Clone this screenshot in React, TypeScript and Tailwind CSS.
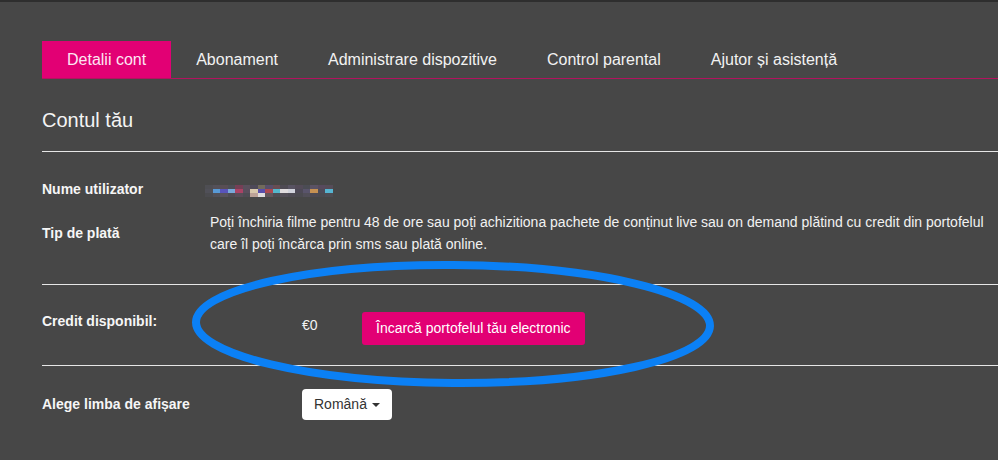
import React from "react";

const TABS = ["Detalii cont", "Abonament", "Administrare dispozitive", "Control parental", "Ajutor și asistență"];

// blurred username, drawn as a pixel mosaic
const PIXELS: string[][] = [
  ["#4f4f55", "#56525a", "#5a4f56", "#4d4f57", "#7a3f58", "#5d5260", "#4e4a5a", "#77705e", "#5a5070", "#6c4e55", "#4f4b55", "#5a5566", "#554c5a", "#4c4d56", "#5d5468", "#594b60", "#574d5a"],
  ["#52525a", "#5aa4e6", "#5b56c8", "#7fb4ea", "#b54369", "#5b5060", "#e8d6b8", "#5a4fb8", "#b84a52", "#56c4dc", "#f2eef0", "#e2e4ee", "#4e4a58", "#5b5670", "#d49a54", "#4e4c5a", "#58c2e2"],
  ["#4c4c50", "#53525a", "#5a5560", "#4f4d55", "#5a4e5a", "#4e4d55", "#c9aca0", "#f0eef0", "#65585e", "#4f4d55", "#55505a", "#4f4c56", "#4c4b52", "#534f5a", "#4e4b55", "#4c4b52", "#4e4d55"],
];

export default function App() {
  return (
    <div
      className="relative w-[998px] h-[460px] overflow-hidden bg-[#474747] border-t-2 border-[#2e2e2e] pl-[42px] pt-[39px] text-white"
      style={{ fontFamily: '"Liberation Sans", Arial, sans-serif' }}
    >
      {/* tabs */}
      <div className="flex border-b border-[#b3135f] w-[1000px]">
        {TABS.map((t, i) => (
          <div
            key={t}
            className={
              "h-[37px] px-[25px] flex items-center text-[16px] whitespace-nowrap " +
              (i === 0 ? "bg-[#e20074] text-[#fde6f2]" : "text-[#f2f2f2]")
            }
          >
            {t}
          </div>
        ))}
      </div>

      <div className="mt-[29px] pb-[19px] border-b border-[#e6e6e6] w-[1000px]">
        <h1 className="text-[20px] leading-[24px] text-[#f4f4f4]">Contul tău</h1>
      </div>

      {/* rows */}
      <div className="pt-[24px] pb-[29px] border-b border-[#e6e6e6] w-[1000px]">
        <div className="flex items-center h-[27px]">
          <div className="w-[163px] shrink-0 text-[14px] font-bold text-[#f6f6f6]">Nume utilizator</div>
          <div className="flex flex-col opacity-90 mt-[2px]">
            {PIXELS.map((row, r) => (
              <div key={r} className="flex">
                {row.map((c, k) => (
                  <div key={k} className="w-[7.5px] h-[4px]" style={{ background: c }} />
                ))}
              </div>
            ))}
          </div>
        </div>
        <div className="flex items-center mt-[8px]">
          <div className="w-[168px] shrink-0 text-[14px] font-bold text-[#f6f6f6]">Tip de plată</div>
          <p className="shrink-0 whitespace-nowrap text-[14px] leading-[22px] text-[#f2f2f2]">
            Poți închiria filme pentru 48 de ore sau poți achizitiona pachete de conținut live sau on demand plătind cu credit din portofelul
            <br />
            care îl poți încărca prin sms sau plată online.
          </p>
        </div>
      </div>

      <div className="flex items-center h-[81px] border-b border-[#e6e6e6] w-[1000px]">
        <div className="w-[260px] shrink-0 text-[14px] font-bold text-[#f6f6f6] pb-[7px]">Credit disponibil:</div>
        <div className="w-[60px] shrink-0 text-[14px] text-[#f4f4f4]">€0</div>
        <button className="h-[33px] px-[14px] bg-[#e20074] rounded-[3px] text-[14px] text-white mt-[6px]">
          Încarcă portofelul tău electronic
        </button>
      </div>

      <div className="flex items-center mt-[23px]">
        <div className="w-[260px] shrink-0 text-[14px] font-bold text-[#f6f6f6]">Alege limba de afișare</div>
        <button className="h-[31px] px-[12px] bg-white rounded-[4px] text-[14px] text-[#333] flex items-center gap-[5px]">
          Română
          <span className="w-0 h-0 border-l-[4px] border-r-[4px] border-t-[4px] border-l-transparent border-r-transparent border-t-[#333]" />
        </button>
      </div>

      {/* hand-drawn highlight */}
      <svg className="absolute left-[190px] top-[255px] pointer-events-none" width="528" height="134" viewBox="0 0 528 134">
        <ellipse cx="263" cy="67" rx="257" ry="59" fill="none" stroke="#0b80f5" strokeWidth="8" transform="rotate(0.4 263 67)" />
      </svg>
    </div>
  );
}
